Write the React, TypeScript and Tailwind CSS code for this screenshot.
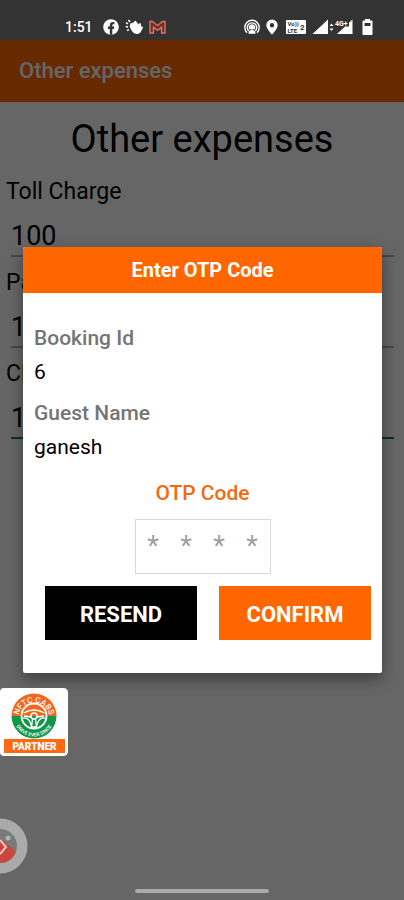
import { useState } from 'react';
import type { FormEvent } from 'react';

const expenses = [
  { id: 'toll', label: 'Toll Charge', value: '100', active: false },
  { id: 'parking', label: 'Parking', value: '100', active: false },
  { id: 'cleaning', label: 'Cleaning', value: '100', active: true },
];

const StatusBar = () => (
  <div className="relative z-20 flex h-10 items-center justify-between bg-[#333333] pt-3.5 pr-[30px] pl-[65px] text-white">
    <div className="flex items-center gap-1.5">
      <span className="mr-1 text-[14px] leading-none font-medium">1:51</span>
      <svg className="size-4" viewBox="0 0 16 16" aria-label="Facebook">
        <circle cx="8" cy="8" r="7.8" fill="#fff" />
        <path d="M6.800 15.700V10H4.900V7.600h1.900V6.300c0-2 1.200-3.200 3.100-3.200.8 0 1.500.1 1.500.1v2h-.9c-.9 0-1.200.5-1.200 1.100v1.300h2L11 10H9.300v5.700z" fill="#333" />
      </svg>
      <svg className="h-4 w-[18px]" viewBox="0 0 18 16" aria-label="Wave">
        <path d="M5.500 4.500 8.500 3.600 9.500 2.200q1-.8 1.800.3l2.200 3 .6-1c.6-.9 1.600-.6 1.700.3l.5 3 .9-.3q1 .2.700 1.300L16 12.500c-.9 2-3 2.900-5.200 2.300-2-.5-3.300-1.800-4.200-3.300L4.600 7.600z" fill="#fff" />
        <path d="M1 3.500 3 5M3.500 1 5 3.200M.8 7.500l2.300.4M2 11.700l2-1" stroke="#fff" strokeWidth="1.500" />
      </svg>
      <svg className="h-4 w-[17px]" viewBox="0 0 17 16" aria-label="Gmail">
        <path d="M1 14V2.500h2.600l4.900 4.200 4.900-4.200H16V14h-3.500V8.200l-4 3.200-4-3.200V14z" fill="#6b3028" stroke="#e2725f" strokeWidth="1.400" />
      </svg>
    </div>
    <div className="flex items-center gap-1.5">
      <svg className="size-4" viewBox="0 0 16 16" fill="none" stroke="#fff" strokeWidth="1.400" aria-label="Hotspot">
        <path d="M3 13.700a7.200 7.200 0 1 1 10 0M4.800 12a4.700 4.700 0 1 1 6.400 0" />
        <path d="M6.300 10.200a2.400 2.400 0 1 1 3.400 0" />
        <path d="M5.200 14c0-3 5.600-3 5.600 0z" fill="#fff" />
        <circle cx="8" cy="8.800" r="1.300" fill="#fff" />
      </svg>
      <svg className="h-4 w-3" viewBox="0 0 12 16" aria-label="Location">
        <path fillRule="evenodd" d="M6 .5A5.700 5.700 0 0 0 .3 6.200C.3 10 6 15.500 6 15.500s5.700-5.500 5.700-9.300A5.700 5.700 0 0 0 6 .5zM6 4a2.200 2.200 0 1 1 0 4.400A2.200 2.200 0 0 1 6 4z" fill="#fff" />
      </svg>
      <svg className="ml-0.5 h-4 w-5" viewBox="0 0 20 16" aria-label="VoLTE 2">
        <rect y="1" width="20" height="14" rx="1" fill="#fff" />
        <g fill="#333" fontFamily="Roboto, sans-serif" fontWeight="700" fontSize="6">
          <text x="1.500" y="7">Vo))</text>
          <text x="1.500" y="14">LTE</text>
          <text x="14" y="10.500" fontSize="8">2</text>
        </g>
      </svg>
      <svg className="h-4 w-[41px]" viewBox="0 0 41 16" aria-label="Mobile signal">
        <path d="M16 .5V15H.5z" fill="#fff" />
        <path d="M17.500 7l2-2.600 2 2.600zM17.500 9.500h4l-2 2.600z" fill="#fff" />
        <path d="M40.500 .5V15H25z" fill="#fff" />
        <rect x="23" y="0" width="14" height="7.500" fill="#333" />
        <text x="23" y="6.500" fontSize="7" fontWeight="700" fill="#fff" fontFamily="Roboto, sans-serif">4G+</text>
      </svg>
      <svg className="ml-0.5 h-4 w-[13px]" viewBox="0 0 13 16" aria-label="Battery">
        <path fillRule="evenodd" d="M4 0h5v1.500h1.500q1 0 1 1V15q0 1-1 1h-8q-1 0-1-1V2.500q0-1 1-1H4zM3.500 4v3h6V4z" fill="#fff" />
      </svg>
    </div>
  </div>
);

const ExpenseField = ({ id, label, value, active }: (typeof expenses)[number]) => (
  <div className="mb-3 flex flex-col">
    <label htmlFor={id} className="ml-1.5 text-[23px] leading-7 text-black">
      {label}
    </label>
    <input
      id={id}
      defaultValue={value}
      inputMode="numeric"
      className={`mr-2.5 ml-[11px] h-[51px] border-b-2 bg-transparent pt-2.5 text-[27px] text-black outline-none ${
        active ? 'border-[#008568]' : 'border-[#b4b4b4]'
      }`}
    />
  </div>
);

const OtpDialog = () => {
  const [code, setCode] = useState(['', '', '', '']);

  const handleChange = (index: number, digit: string) => {
    setCode(code.map((current, i) => (i === index ? digit : current)));
  };

  const handleSubmit = (e: FormEvent) => {
    e.preventDefault();
  };

  return (
    <form
      onSubmit={handleSubmit}
      role="dialog"
      aria-labelledby="otp-title"
      className="w-full overflow-hidden rounded-xs bg-white shadow-[0_6px_16px_rgba(0,0,0,0.4)]"
    >
      <h2 id="otp-title" className="bg-[#ff6600] text-center text-[20px] leading-[46px] font-bold text-white">
        Enter OTP Code
      </h2>
      <dl className="px-[11px] pt-7 text-[21px] leading-[34px]">
        <dt className="font-medium text-[#757575]">Booking Id</dt>
        <dd className="text-black">6</dd>
        <dt className="mt-[7px] font-medium text-[#757575]">Guest Name</dt>
        <dd className="text-black">ganesh</dd>
      </dl>
      <p className="mt-3 text-center text-[21px] leading-[34px] font-medium text-[#f26a10]">OTP Code</p>
      <div className="mt-[9px] flex justify-center">
        <div className="flex h-[55px] border border-[#d8d8d8] px-px">
          {code.map((digit, index) => (
            <input
              key={index}
              value={digit}
              maxLength={1}
              placeholder="*"
              aria-label={`OTP digit ${index + 1}`}
              onChange={(e) => handleChange(index, e.target.value)}
              className="w-[33px] text-center text-[27px] text-black outline-none placeholder:text-[#a0a0a0]"
            />
          ))}
        </div>
      </div>
      <div className="mt-3 mb-[33px] flex gap-[22px] pr-[11px] pl-[22px] text-[22px] font-bold text-white">
        <button type="button" className="h-[54px] flex-1 bg-black pt-0.5">RESEND</button>
        <button type="submit" className="h-[54px] flex-1 bg-[#ff6600] pt-0.5">CONFIRM</button>
      </div>
    </form>
  );
};

const PartnerBadge = () => (
  <svg className="h-[68px] w-[68px]" viewBox="0 0 68 68" aria-label="Partner">
    <path d="M4 0h59q5 0 5 5v58q0 5-5 5H4q-4 0-4-4V4q0-4 4-4z" fill="#fff" />
    <path d="M11.500 28a22.500 22.500 0 0 1 45 0z" fill="#f4661b" />
    <path d="M11.500 28a22.500 22.500 0 0 0 45 0z" fill="#12964a" />
    <g fill="none" stroke="#fff" strokeWidth="1.500">
      <circle cx="34" cy="28" r="12.500" strokeWidth="1.800" />
      <circle cx="34" cy="28" r="3" />
      <path d="M23.500 25q10.500-6 21 0M23 30q7-1 8.500 9M45 30q-7-1-8.500 9M31 29l-7-1M37 29l7-1M32.500 31l-1 8h5l-1-8" strokeWidth="1.300" />
    </g>
    <defs>
      <path id="arc-top" d="M18.500 30a15.500 15.500 0 0 1 31 0" />
      <path id="arc-bottom" d="M13.500 28a20.500 20.500 0 0 0 41 0" />
    </defs>
    <g fill="#fff" fontFamily="Roboto, sans-serif" fontWeight="500" textAnchor="middle">
      <text fontSize="8">
        <textPath href="#arc-top" startOffset="50%">NFTC CABS</textPath>
      </text>
      <text fontSize="5">
        <textPath href="#arc-bottom" startOffset="50%">DRIVE EVER SINCE</textPath>
      </text>
    </g>
    <rect x="4" y="51" width="61" height="14" fill="#ff6a13" />
    <text x="34.500" y="61.500" fontSize="10" fontWeight="900" fill="#fff" textAnchor="middle" fontFamily="Roboto, sans-serif">
      PARTNER
    </text>
  </svg>
);

const RecorderBubble = () => (
  <svg className="h-14 w-7" viewBox="0 0 28 56" aria-label="Screen recorder">
    <circle cx="0" cy="28" r="27.500" fill="#aaaaaa" />
    <circle cx="0" cy="28" r="17" fill="#777b79" />
    <path d="M0 45a17 17 0 0 0 15-9q1-3-1-4L5 24l-5-3z" fill="#c8473f" />
    <path d="M0 22l6 7-6 7" fill="none" stroke="#e8c6c2" strokeWidth="2" />
    <circle cx="8" cy="20" r="2.500" fill="#a9b5ad" />
  </svg>
);

const App = () => {
  return (
    <div className="relative flex min-h-screen flex-col bg-white font-['Roboto',sans-serif]">
      <StatusBar />
      <header className="bg-[#ff6600] px-[19px]">
        <span className="block text-[22px] leading-[62px] font-medium text-white">Other expenses</span>
      </header>
      <main className="flex-1 pt-3">
        <h1 className="mb-3.5 text-center text-[38px] leading-[50px] text-black">Other expenses</h1>
        {expenses.map((expense) => (
          <ExpenseField key={expense.id} {...expense} />
        ))}
      </main>

      {/* dimmed backdrop, the dialog sits between the status bar and the nav bar */}
      <div className="absolute inset-0 z-10 flex items-center bg-black/60 pt-10 pr-[22px] pb-5 pl-[23px]">
        <OtpDialog />
      </div>

      <div className="absolute bottom-36 left-0 z-20">
        <PartnerBadge />
      </div>
      <div className="absolute bottom-[26px] left-0 z-20">
        <RecorderBubble />
      </div>
      <div className="absolute inset-x-0 bottom-[7px] z-20 flex justify-center">
        <div className="h-1 w-1/3 rounded-full bg-[#aaaaaa]" />
      </div>
    </div>
  );
};

export default App;
